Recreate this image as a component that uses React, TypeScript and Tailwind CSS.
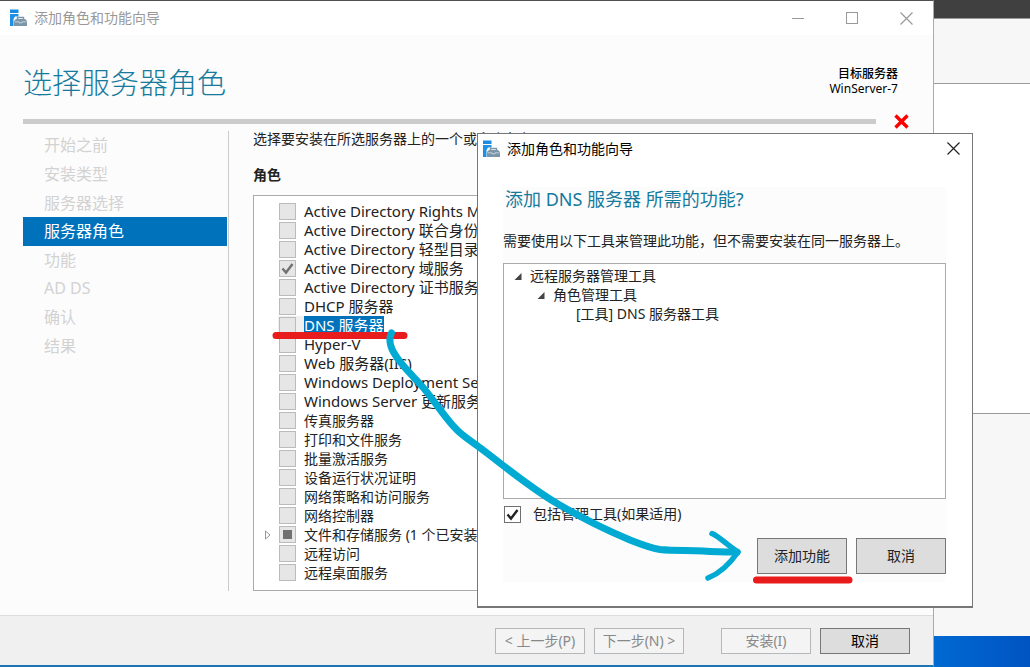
import { ReactNode } from 'react';

type CheckState = 'off' | 'on' | 'mixed';

const steps = ['开始之前', '安装类型', '服务器选择', '服务器角色', '功能', 'AD DS', '确认', '结果'];

const roles: { name: string; state?: CheckState; selected?: boolean; expandable?: boolean }[] = [
  { name: 'Active Directory Rights Management Services' },
  { name: 'Active Directory 联合身份验证服务' },
  { name: 'Active Directory 轻型目录服务' },
  { name: 'Active Directory 域服务', state: 'on' },
  { name: 'Active Directory 证书服务' },
  { name: 'DHCP 服务器' },
  { name: 'DNS 服务器', selected: true },
  { name: 'Hyper-V' },
  { name: 'Web 服务器(IIS)' },
  { name: 'Windows Deployment Services' },
  { name: 'Windows Server 更新服务' },
  { name: '传真服务器' },
  { name: '打印和文件服务' },
  { name: '批量激活服务' },
  { name: '设备运行状况证明' },
  { name: '网络策略和访问服务' },
  { name: '网络控制器' },
  { name: '文件和存储服务 (1 个已安装，共 12 个)', state: 'mixed', expandable: true },
  { name: '远程访问' },
  { name: '远程桌面服务' },
];

export default function App() {
  return (
    <div className="relative h-screen overflow-hidden bg-[#0066cf] font-['Noto_Sans','Noto_Sans_CJK_SC',sans-serif] text-sm text-[#222]">
      <BackgroundWindow />
      <WizardWindow />
      <FeatureDialog />
      <Annotations />
    </div>
  );
}

// Server manager and desktop, only its right edge shows
function BackgroundWindow() {
  return (
    <div className="flex h-full flex-col">
      <div className="h-[18px] bg-[#404040]" />
      <div className="h-[66px] border-y border-[#9a9a9a] bg-[#f7f7f7]" />
      <div className="h-[329px] bg-white" />
      <div className="h-[223px] border-t border-[#9a9a9a] bg-[#f7f7f7]" />
      <div className="flex flex-1 justify-end">
        <div className="w-24 bg-linear-to-r from-[#0069d2] to-[#0054c2]" />
      </div>
    </div>
  );
}

function WizardWindow() {
  return (
    <section className="absolute inset-y-0 left-0 right-24 flex flex-col border-b-2 border-r border-t border-b-[#1b75b5] border-r-[#aaa] border-t-[#505050] bg-[#fcfcfc]">
      <header className="flex h-[34px] shrink-0 items-center bg-white pl-2.5 pr-5 text-[#999]">
        <ServerIcon />
        <span className="ml-1.5 flex-1">添加角色和功能向导</span>
        <div className="flex items-center gap-[42px]">
          <button type="button" aria-label="最小化">
            <svg width="12" height="12" stroke="#999" fill="none"><path d="M0 6.5H12" /></svg>
          </button>
          <button type="button" aria-label="最大化">
            <svg width="12" height="12" stroke="#999" fill="none"><rect x=".5" y=".5" width="11" height="11" /></svg>
          </button>
          <button type="button" aria-label="关闭">
            <CloseGlyph color="#999" />
          </button>
        </div>
      </header>

      <div className="flex h-[83px] shrink-0 items-center justify-between pl-[23px] pr-[35px]">
        <h1 className="mt-3 text-[29px] font-light text-[#157a9c]">选择服务器角色</h1>
        <div className="mt-2 text-right text-xs leading-[15px] text-black">
          <p className="font-medium">目标服务器</p>
          <p>WinServer-7</p>
        </div>
      </div>

      <div className="flex h-[6px] shrink-0 items-center gap-[18px] pl-[23px] pr-6">
        <div className="h-[5px] flex-1 bg-[#ccc]" />
        <svg width="15" height="15" viewBox="0 0 15 15" stroke="#ff0000" strokeWidth="3.4" fill="none" className="shrink-0">
          <path d="M1.5 1.5L13.5 13.5M13.5 1.5L1.5 13.5" />
        </svg>
      </div>

      <div className="flex min-h-0 flex-1 pb-6 pl-[23px] pr-6 pt-[7px]">
        <nav className="flex w-[206px] border-r border-[#ccc]">
          <ol className="flex h-[229px] w-[204px] flex-col text-base">
            {steps.map((step) => (
              <li
                key={step}
                className={`flex flex-1 items-center pl-[21px] ${
                  step === '服务器角色' ? 'bg-[#0072bc] text-white' : 'text-[#d2d2d2]'
                }`}
              >
                {step}
              </li>
            ))}
          </ol>
        </nav>

        <main className="flex min-w-0 flex-1 flex-col pl-6">
          <p className="leading-4">选择要安装在所选服务器上的一个或多个角色。</p>
          <h2 className="mt-5 font-bold leading-4">角色</h2>
          <ul className="mt-3 flex-1 border border-[#aaa] bg-white pt-[6px]">
            {roles.map((role) => (
              <li key={role.name} className={`flex h-[19px] items-center ${/^[A-Z]/.test(role.name) ? 'text-[15px]' : ''}`}>
                <span className="flex w-6 justify-center pl-1">
                  {role.expandable && (
                    <svg width="6" height="10" fill="none" stroke="#999"><path d="M.5 1V9L5 5Z" /></svg>
                  )}
                </span>
                <label className={`flex items-center pl-px ${role.selected ? 'bg-[#f0f0f0]' : ''}`}>
                  <CheckBox state={role.state ?? 'off'} disabled />
                  <span className={`ml-2 whitespace-nowrap leading-[19px] ${role.selected ? 'bg-[#0072bc] text-white' : ''}`}>
                    {role.name}
                  </span>
                </label>
              </li>
            ))}
          </ul>
        </main>
      </div>

      <footer className="flex h-[50px] shrink-0 items-center justify-end border-t border-[#ddd] bg-[#f0f0f0] pr-[23px]">
        <FooterButton disabled>&lt; 上一步(P)</FooterButton>
        <FooterButton disabled className="ml-[9px]">下一步(N) &gt;</FooterButton>
        <FooterButton disabled className="ml-[37px]">安装(I)</FooterButton>
        <FooterButton className="ml-[9px]">取消</FooterButton>
      </footer>
    </section>
  );
}

function FeatureDialog() {
  return (
    <section
      role="dialog"
      aria-label="添加角色和功能向导"
      className="absolute left-[477px] right-[57px] top-[133px] border border-b-2 border-[#777] bg-white pb-6 text-[#222]"
    >
      <header className="flex h-[29px] items-center pl-[5px] pr-3 text-black">
        <ServerIcon />
        <span className="ml-1.5 flex-1">添加角色和功能向导</span>
        <button type="button" aria-label="关闭">
          <CloseGlyph color="#222" />
        </button>
      </header>

      <div className="ml-[25px] mr-[26px] mt-6 bg-[#fcfcfc] pb-2">
        <h2 className="pl-0.5 text-lg leading-6 text-[#157a9c]">添加 DNS 服务器 所需的功能?</h2>
        <p className="mt-5 leading-5">需要使用以下工具来管理此功能，但不需要安装在同一服务器上。</p>

        <ul className="mt-3 h-[236px] border border-[#aaa] bg-white pl-2 pt-0.5 leading-[19px]">
          <TreeItem label="远程服务器管理工具">
            <TreeItem label="角色管理工具">
              <li className="pl-[18px]">[工具] DNS 服务器工具</li>
            </TreeItem>
          </TreeItem>
        </ul>

        <label className="mt-[5px] flex items-center pl-px">
          <CheckBox state="on" />
          <span className="ml-3 leading-5">包括管理工具(如果适用)</span>
        </label>

        <div className="mt-3.5 flex justify-end gap-[9px]">
          <DialogButton>添加功能</DialogButton>
          <DialogButton>取消</DialogButton>
        </div>
      </div>
    </section>
  );
}

function TreeItem({ label, children }: { label: string; children: ReactNode }) {
  return (
    <li>
      <div className="flex items-center">
        <svg width="10" height="10" className="mr-2 shrink-0"><path d="M9.500 2V9H2.500Z" fill="#444" /></svg>
        {label}
      </div>
      <ul className="pl-[23px]">{children}</ul>
    </li>
  );
}

function CheckBox({ state, disabled = false }: { state: CheckState; disabled?: boolean }) {
  return (
    <span className="grid size-[17px] shrink-0 place-items-center">
      <input
        type="checkbox"
        defaultChecked={state === 'on'}
        disabled={disabled}
        className={`col-start-1 row-start-1 size-[17px] appearance-none border ${
          disabled ? 'border-[#bbb] bg-[#e6e6e6]' : 'border-[#707070] bg-white'
        }`}
      />
      {state === 'on' && (
        <svg
          width="13"
          height="13"
          fill="none"
          stroke={disabled ? '#707070' : '#222'}
          strokeWidth="2.4"
          className="pointer-events-none col-start-1 row-start-1"
        >
          <path d="M1.5 6.5L5 10.5L11.5 2" />
        </svg>
      )}
      {state === 'mixed' && <span className="pointer-events-none col-start-1 row-start-1 size-[9px] bg-[#707070]" />}
    </span>
  );
}

function FooterButton({ children, disabled, className = '' }: { children: ReactNode; disabled?: boolean; className?: string }) {
  return (
    <button
      type="button"
      disabled={disabled}
      className={`h-[26px] w-[90px] whitespace-nowrap border ${
        disabled ? 'border-[#b4b8bb] bg-[#f4f4f4] text-[#888]' : 'border-[#777] bg-[#ddd] text-black'
      } ${className}`}
    >
      {children}
    </button>
  );
}

function DialogButton({ children }: { children: ReactNode }) {
  return (
    <button type="button" className="h-9 w-[90px] border border-[#777] bg-[#ddd]">
      {children}
    </button>
  );
}

function CloseGlyph({ color }: { color: string }) {
  return (
    <svg width="13" height="13" stroke={color} strokeWidth="1.2" fill="none">
      <path d="M.5 .5L12.5 12.5M12.5 .5L.5 12.5" />
    </svg>
  );
}

function ServerIcon() {
  return (
    <svg width="18" height="18" viewBox="0 0 18 18" className="shrink-0">
      <path d="M0 0.500H8.500V4H0Z" fill="#1c8ade" />
      <path d="M0 5H8.500V7.500H5L3.500 10V17H0Z" fill="#2090e4" />
      <path d="M7.500 10.500V8.500H13.500V10.500" fill="none" stroke="#7b96a8" strokeWidth="1.4" />
      <path d="M4 12L6 10H15L17 12V17H4Z" fill="#7b96a8" />
      <path d="M4.500 12.800H9V13.800H12V12.800H16.500" fill="none" stroke="#dfe8ee" strokeWidth=".7" />
    </svg>
  );
}

// Hand-drawn marks over both windows
function Annotations() {
  return (
    <svg width="1030" height="667" fill="none" strokeLinecap="round" strokeLinejoin="round" className="pointer-events-none absolute left-0 top-0">
      <path d="M276 335.5H404M756.500 580H849" stroke="#e81c1c" strokeWidth="7" />
      <g stroke="#00aad2">
        <path d="M391.500 333C388 340 390 346 394 353C401 365 411 374 420 384C433 398 443 416 457 430C464 437 474 443 483 450C508 469 532 489 558 504C582 518 606 530 630 540C640 544 650 548 660 549.500C675 551 690 550 703 551C716 552 727 552 737 552" strokeWidth="7" />
        <path d="M712 533.500C720 537 728 546 738 552C731 562 721 573 708 578" strokeWidth="5.500" />
      </g>
    </svg>
  );
}
